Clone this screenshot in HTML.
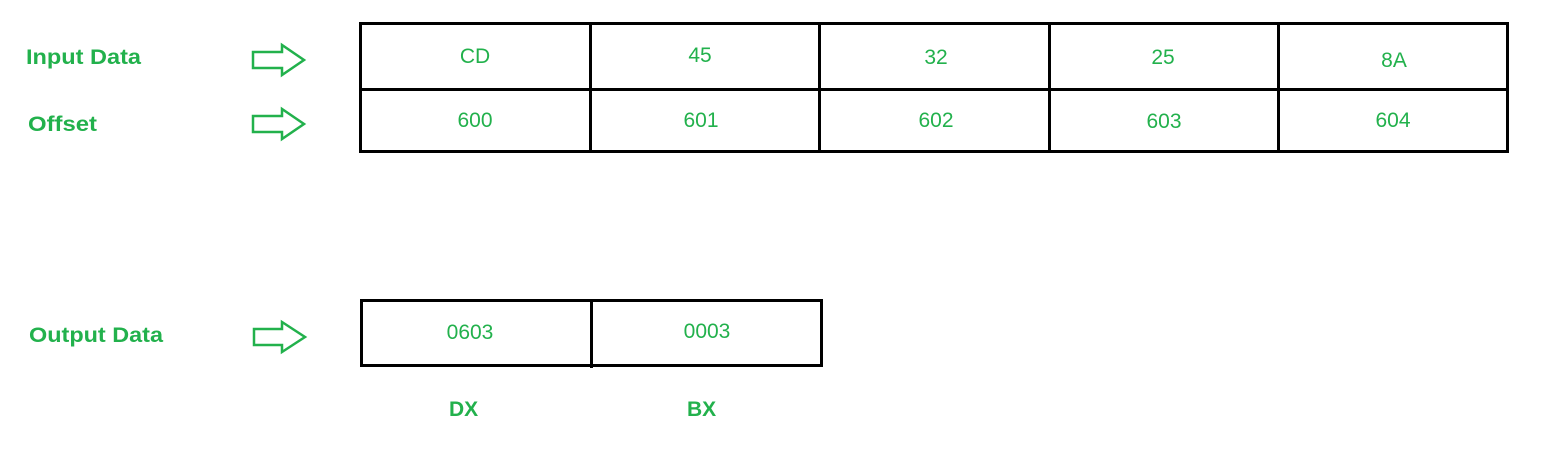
<!DOCTYPE html>
<html><head><style>html,body{margin:0;padding:0;background:#fff;width:1563px;height:469px;overflow:hidden}</style></head>
<body>
<svg width="1563" height="469" xmlns="http://www.w3.org/2000/svg" font-family="Liberation Sans, sans-serif">
<g fill="none" stroke="#000" stroke-width="3">
<rect x="360.5" y="23.5" width="1147" height="128"/>
<line x1="360" y1="89.5" x2="1508" y2="89.5"/>
<line x1="590.5" y1="23" x2="590.5" y2="152"/>
<line x1="819.5" y1="23" x2="819.5" y2="152"/>
<line x1="1049.5" y1="23" x2="1049.5" y2="152"/>
<line x1="1278.5" y1="23" x2="1278.5" y2="152"/>
<rect x="361.5" y="300.5" width="460" height="65"/>
<line x1="591.5" y1="300" x2="591.5" y2="368"/>
</g>
<g fill="none" stroke="#22b14c" stroke-width="2.5">
<path d="M253 52 H282 V45 L304 60 L282 75 V68 H253 Z"/>
<path d="M253 116 H282 V109 L304 124 L282 139 V132 H253 Z"/>
<path d="M254 329 H282 V322 L305 337 L282 352 V345 H254 Z"/>
</g>
<g fill="#22b14c" font-size="21" font-weight="bold">
<text x="26" y="64" textLength="115" lengthAdjust="spacingAndGlyphs">Input Data</text>
<text x="28" y="131" textLength="69" lengthAdjust="spacingAndGlyphs">Offset</text>
<text x="29" y="342" textLength="134" lengthAdjust="spacingAndGlyphs">Output Data</text>
<text x="449" y="416">DX</text>
<text x="687" y="416">BX</text>
</g>
<g fill="#22b14c" font-size="21" text-anchor="middle">
<text x="475" y="63">CD</text>
<text x="700" y="62">45</text>
<text x="936" y="64">32</text>
<text x="1163" y="64">25</text>
<text x="1394" y="67">8A</text>
<text x="475" y="127">600</text>
<text x="701" y="127">601</text>
<text x="936" y="127">602</text>
<text x="1164" y="128">603</text>
<text x="1393" y="127">604</text>
<text x="470" y="339">0603</text>
<text x="707" y="338">0003</text>
</g>
</svg>
</body></html>
